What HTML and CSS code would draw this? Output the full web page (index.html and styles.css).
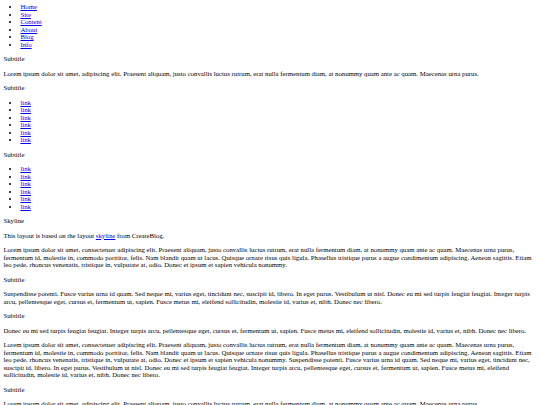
FILE: index.html
```html
<!DOCTYPE html>
<html>
<head>
<meta charset="utf-8">
<title>Skyline</title>
<link rel="stylesheet" href="styles.css">
</head>
<body class="page">
<ul class="nav">
<li><a href="#">Home</a></li>
<li><a href="#">Site</a></li>
<li><a href="#">Content</a></li>
<li><a href="#">About</a></li>
<li><a href="#">Blog</a></li>
<li><a href="#">Info</a></li>
</ul>
<p class="title">Subtitle</p>
<p class="text">Lorem ipsum dolor sit amet, adipiscing elit. Praesent aliquam, justo convallis luctus rutrum, erat nulla fermentum diam, at nonummy quam ante ac quam. Maecenas urna purus.</p>
<p class="title">Subtitle</p>
<ul class="links">
<li><a href="#">link</a></li>
<li><a href="#">link</a></li>
<li><a href="#">link</a></li>
<li><a href="#">link</a></li>
<li><a href="#">link</a></li>
<li><a href="#">link</a></li>
</ul>
<p class="title">Subtitle</p>
<ul class="links">
<li><a href="#">link</a></li>
<li><a href="#">link</a></li>
<li><a href="#">link</a></li>
<li><a href="#">link</a></li>
<li><a href="#">link</a></li>
<li><a href="#">link</a></li>
</ul>
<p class="title">Skyline</p>
<p class="text">This layout is based on the layout <a href="#">skyline</a> from CreateBlog.</p>
<p class="text">Lorem ipsum dolor sit amet, consectetuer adipiscing elit. Praesent aliquam, justo convallis luctus rutrum, erat nulla fermentum diam, at nonummy quam ante ac quam. Maecenas urna purus, fermentum id, molestie in, commodo porttitor, felis. Nam blandit quam ut lacus. Quisque ornare risus quis ligula. Phasellus tristique purus a augue condimentum adipiscing. Aenean sagittis. Etiam leo pede, rhoncus venenatis, tristique in, vulputate at, odio. Donec et ipsum et sapien vehicula nonummy.</p>
<p class="title">Subtitle</p>
<p class="text">Suspendisse potenti. Fusce varius urna id quam. Sed neque mi, varius eget, tincidunt nec, suscipit id, libero. In eget purus. Vestibulum ut nisl. Donec eu mi sed turpis feugiat feugiat. Integer turpis arcu, pellentesque eget, cursus et, fermentum ut, sapien. Fusce metus mi, eleifend sollicitudin, molestie id, varius et, nibh. Donec nec libero.</p>
<p class="title">Subtitle</p>
<p class="text">Donec eu mi sed turpis feugiat feugiat. Integer turpis arcu, pellentesque eget, cursus et, fermentum ut, sapien. Fusce metus mi, eleifend sollicitudin, molestie id, varius et, nibh. Donec nec libero.</p>
<p class="text">Lorem ipsum dolor sit amet, consectetuer adipiscing elit. Praesent aliquam, justo convallis luctus rutrum, erat nulla fermentum diam, at nonummy quam ante ac quam. Maecenas urna purus, fermentum id, molestie in, commodo porttitor, felis. Nam blandit quam ut lacus. Quisque ornare risus quis ligula. Phasellus tristique purus a augue condimentum adipiscing. Aenean sagittis. Etiam leo pede, rhoncus venenatis, tristique in, vulputate at, odio. Donec et ipsum et sapien vehicula nonummy. Suspendisse potenti. Fusce varius urna id quam. Sed neque mi, varius eget, tincidunt nec, suscipit id, libero. In eget purus. Vestibulum ut nisl. Donec eu mi sed turpis feugiat feugiat. Integer turpis arcu, pellentesque eget, cursus et, fermentum ut, sapien. Fusce metus mi, eleifend sollicitudin, molestie id, varius et, nibh. Donec nec libero.</p>
<p class="title">Subtitle</p>
<p class="text">Lorem ipsum dolor sit amet, adipiscing elit. Praesent aliquam, justo convallis luctus rutrum, erat nulla fermentum diam, at nonummy quam ante ac quam. Maecenas urna purus.</p>
</body>
</html>
```

FILE: styles.css
```css
html {
  background: #fff;
}
.page {
  margin: 3.4px;
  font-family: "Liberation Serif", "Times New Roman", serif;
  font-size: 6.75px;
  line-height: 7.5px;
  color: #000;
}
.nav {
  margin: 0;
  padding-left: 17px;
}
.links {
  margin: 7px 0;
  padding-left: 17px;
}
.title,
.text {
  margin: 7px 0;
}
a {
  color: #00e;
}
```
